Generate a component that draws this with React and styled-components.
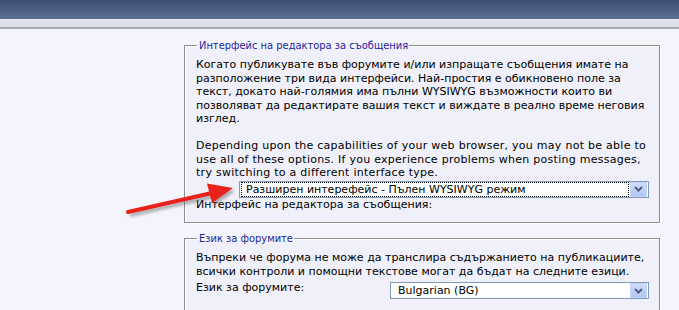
import React from 'react';
import styled, { createGlobalStyle } from 'styled-components';

const GlobalStyle = createGlobalStyle`
  body {
    margin: 0;
    background: #f4f4fd;
    font-family: "DejaVu Sans", Verdana, sans-serif;
    font-size: 11px;
    color: #000;
  }
`

const Page = styled.div`
  position: relative;
  width: 679px;
  height: 310px;
  overflow: hidden;
`

const TopBar = styled.div`
  height: 19px;
  background: linear-gradient(#3c4f72, #5b6f94);
`

const SubBar = styled.div`
  height: 8px;
  background: linear-gradient(#e6e8f0, #d8dbe6);
  border-bottom: 2px solid #a9a9ab;
`

const Content = styled.div`
  padding: 10px 0 0 184px;
  width: 476px;
  display: flex;
  flex-direction: column;
  gap: 9px;
`

const Fieldset = styled.fieldset`
  margin: 0;
  padding: 6px 10px 11px 11px;
  border: 1px solid #8e8e8e;
  box-shadow: 1px 1px 0 #fff, inset 1px 1px 0 #fff;
  background: #eff0f9;
  min-width: 0;
`

const Legend = styled.legend`
  padding: 0 1px 0 2px;
  margin-left: 1px;
  font-family: "DejaVu Sans Condensed", Tahoma, sans-serif;
  font-size: 11px;
  line-height: 13px;
  color: #23239b;
`

const Text = styled.div`
  line-height: 13.5px;
`

const Latin = styled.span`
  letter-spacing: 0.27px;
`

const SelectWrap = styled.div`
  display: flex;
  justify-content: flex-end;
  margin-top: 1px;
`

const Row = styled.div`
  display: flex;
  justify-content: space-between;
  align-items: flex-start;
  margin-top: 3px;
`

const Select = styled.div`
  width: ${p => p.$width}px;
  height: 17px;
  box-sizing: border-box;
  border: 1px solid #7f9db9;
  background: #fff;
  display: flex;
  align-items: center;
  padding: 1px;
  margin-top: ${p => p.$offset || 0}px;
`

const SelectValue = styled.div`
  flex: 1;
  height: 13px;
  line-height: 13px;
  padding-left: ${p => p.$focus ? 4 : 5}px;
  border: 1px dotted ${p => p.$focus ? '#000' : 'transparent'};
  white-space: nowrap;
`

const DropButton = styled.div`
  width: 15px;
  height: 13px;
  margin-left: 1px;
  background: linear-gradient(#cfdcfa, #b3c7f4);
  border: 1px solid #c4d2f5;
  display: flex;
  align-items: center;
  justify-content: center;
`

const Label = styled.div`
  line-height: 13.5px;
`

const ArrowLayer = styled.svg`
  position: absolute;
  left: 0;
  top: 0;
  pointer-events: none;
`

const Chevron = () => (
  <svg width="9" height="6" viewBox="0 0 9 6">
    <path d="M1 1 L4.5 4.5 L8 1" fill="none" stroke="#4c5f87" strokeWidth="2" />
  </svg>
)

const FakeSelect = ({ width, value, focus, offset }) => (
  <Select $width={width} $offset={offset}>
    <SelectValue $focus={focus}>{value}</SelectValue>
    <DropButton><Chevron /></DropButton>
  </Select>
)

export default function App() {
  return (
    <Page>
      <GlobalStyle />
      <TopBar />
      <SubBar />
      <Content>
        <Fieldset>
          <Legend>Интерфейс на редактора за съобщения</Legend>
          <Text>
            Когато публикувате във форумите и/или изпращате съобщения имате на разположение три вида интерфейси. Най-простия е обикновено поле за текст, докато най-голямия има пълни WYSIWYG възможности които ви позволяват да редактирате вашия текст и виждате в реално време неговия изглед.
            <br /><br />
            <Latin>
              Depending upon the capabilities of your web browser, you may not be able to<br />
              use all of these options. If you experience problems when posting messages,<br />
              try switching to a different interface type.
            </Latin>
          </Text>
          <SelectWrap>
            <FakeSelect width={410} value="Разширен интерефейс - Пълен WYSIWYG режим" focus />
          </SelectWrap>
          <Label>Интерфейс на редактора за съобщения:</Label>
        </Fieldset>
        <Fieldset>
          <Legend>Език за форумите</Legend>
          <Text>
            Въпреки че форума не може да транслира съдържанието на публикациите, всички контроли и помощни текстове могат да бъдат на следните езици.
          </Text>
          <Row>
            <Label>Език за форумите:</Label>
            <FakeSelect width={259} value="Bulgarian (BG)" offset={1} />
          </Row>
        </Fieldset>
      </Content>
      <ArrowLayer width="679" height="310">
        <defs>
          <filter id="sh" x="-20%" y="-50%" width="140%" height="200%">
            <feGaussianBlur stdDeviation="1.5" />
          </filter>
        </defs>
        <g transform="translate(2,3)" opacity="0.45" filter="url(#sh)">
          <line x1="128" y1="212" x2="212" y2="193" stroke="#555" strokeWidth="4" />
          <polygon points="233,188 207,183.5 212,203" fill="#555" />
        </g>
        <line x1="128" y1="212" x2="212" y2="193" stroke="#e8231b" strokeWidth="4" strokeLinecap="round" />
        <polygon points="233,188 207,183.5 212,203" fill="#e8231b" />
      </ArrowLayer>
    </Page>
  );
}
